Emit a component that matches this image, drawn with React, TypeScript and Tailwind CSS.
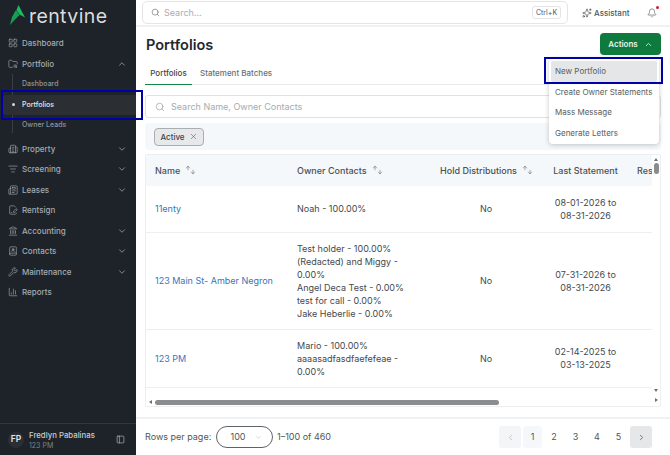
import React from "react";
import {
  LayoutGrid, FolderSearch, ChevronUp, ChevronDown, ChevronLeft, ChevronRight, Building2, ListFilter, Newspaper, FileSignature,
  Landmark, BookUser, Wrench, ChartColumn, Search, Sparkles, Bell, X, PanelLeft, ArrowUp, ArrowDown,
} from "lucide-react";

const Sort = () => (
  <span className="inline-flex items-start ml-[5px] align-middle text-[#4b5563]">
    <ArrowUp size={6} strokeWidth={2} className="-mt-[3px]" />
    <ArrowDown size={6} strokeWidth={2} className="-ml-[1px] mt-[1px]" />
  </span>
);

function NavItem({ icon: Icon, label, chev }: { icon: any; label: string; chev?: "up" | "down" }) {
  return (
    <div className="h-[20.5px] flex items-center pl-[8px] pr-[9px] text-[#a4abb1] text-[8px] font-medium">
      <Icon size={10} strokeWidth={1.5} className="mr-[4px] w-[10px]" />
      <span className="flex-1">{label}</span>
      {chev === "up" && <ChevronUp size={10} strokeWidth={1.8} />}
      {chev === "down" && <ChevronDown size={10} strokeWidth={1.8} />}
    </div>
  );
}

function SubItem({ label, active }: { label: string; active?: boolean }) {
  return (
    <div className={`relative h-[20.5px] flex items-center ml-[3px] pl-[19px] text-[7px] font-medium ${active ? "bg-[#2b2f33] text-[#e5e7e9] rounded-l-[3px]" : "text-[#8f969c]"}`}>
      {active && <span className="absolute left-[8.5px] w-[3px] h-[3px] rounded-full bg-[#d5d8da]" />}
      {label}
    </div>
  );
}

const rows = [
  { name: "11enty", owners: ["Noah - 100.00%"], dates: "08-01-2026 to 08-31-2026", h: "h-[46px]" },
  {
    name: "123 Main St- Amber Negron",
    owners: ["Test holder - 100.00%", "(Redacted) and Miggy - 0.00%", "Angel Deca Test - 0.00%", "test for call - 0.00%", "Jake Heberlie - 0.00%"],
    dates: "07-31-2026 to 08-31-2026",
    h: "",
  },
  { name: "123 PM", owners: ["Mario - 100.00%", "aaaasadfasdfaefefeae - 0.00%"], dates: "02-14-2025 to 03-13-2025", h: "" },
  { name: "", owners: ["Stephanie holder - 100.00%", "Angel Deca Test - 0.00%"], dates: "", h: "" },
];

export default function App() {
  return (
    <div className="relative w-[670px] h-[455px] flex overflow-hidden bg-white text-[#3f4448]" style={{ fontFamily: "Inter, sans-serif" }}>
      <aside className="w-[136px] shrink-0 bg-[#1e2329] flex flex-col">
        <div className="h-[33px] flex items-center pl-[10px] pt-[1px]">
          <svg width="15" height="20" viewBox="0 0 15 20" className="-mt-[4px]">
            <path d="M8.5 0 L15 12.5 L9.5 9.5 L6.5 5 Z" fill="#1fb863" />
            <path d="M6 5 L9.5 10 L5 14.5 L0 20 L2 12 Z" fill="#12a150" />
          </svg>
          <span className="ml-[4px] text-[19.5px] leading-none text-[#d9dcde] tracking-[0.4px]">rentvine</span>
        </div>
        <nav className="flex-1">
          <NavItem icon={LayoutGrid} label="Dashboard" />
          <NavItem icon={FolderSearch} label="Portfolio" chev="up" />
          <div className="relative">
            <span className="absolute left-[12px] top-0 bottom-[3px] w-px bg-[#3a3f44]" />
            <SubItem label="Dashboard" />
            <SubItem label="Portfolios" active />
            <SubItem label="Owner Leads" />
          </div>
          <div className="h-[3px]" />
          <NavItem icon={Building2} label="Property" chev="down" />
          <NavItem icon={ListFilter} label="Screening" chev="down" />
          <NavItem icon={Newspaper} label="Leases" chev="down" />
          <NavItem icon={FileSignature} label="Rentsign" />
          <NavItem icon={Landmark} label="Accounting" chev="down" />
          <NavItem icon={BookUser} label="Contacts" chev="down" />
          <NavItem icon={Wrench} label="Maintenance" chev="down" />
          <NavItem icon={ChartColumn} label="Reports" />
        </nav>
        <div className="h-[32px] border-t border-[#33383d] flex items-center pl-[8px] pr-[11px]">
          <div className="w-[16px] h-[16px] rounded-full bg-[#2a2f34] flex items-center justify-center text-[8.5px] font-semibold text-[#e3e5e7] mr-[5px]">FP</div>
          <div className="flex-1">
            <div className="text-[7.8px] leading-[11px] font-medium text-[#c9cdd0]">Fredlyn Pabalinas</div>
            <div className="text-[7px] leading-[9px] text-[#7d848a]">123 PM</div>
          </div>
          <PanelLeft size={9} strokeWidth={1.6} className="text-[#c2c6c9]" />
        </div>
      </aside>

      <main className="flex-1 min-w-0 flex flex-col">
        <header className="h-[27px] shrink-0 border-b-2 border-[#f0f1f2] flex items-center pl-[6px] pr-[13px]">
          <div className="w-[426px] h-[23px] border border-[#e3e5e7] rounded-[5px] flex items-center pl-[8px] pr-[6px] text-[9px] text-[#a8adb2]">
            <Search size={9} strokeWidth={1.7} className="text-[#666c72] mr-[4px]" />
            <span className="flex-1">Search...</span>
            <span className="h-[13px] w-[29px] text-center border border-[#e3e5e7] rounded-[3px] text-[7px] leading-[11px] text-[#50565b]">Ctrl+K</span>
          </div>
          <Sparkles size={10} strokeWidth={1.5} className="ml-[14px] text-[#3f4448]" />
          <span className="ml-[2px] text-[8px] font-medium text-[#50565b]">Assistant</span>
          <span className="relative ml-auto">
            <Bell size={10} strokeWidth={1.5} className="text-[#50565b]" />
            <span className="absolute -top-[2px] -right-[2px] w-[3px] h-[3px] rounded-full bg-[#d5182f]" />
          </span>
        </header>

        <div className="flex-1 min-h-0 flex flex-col px-[9px]">
          <div className="h-[34px] pt-[6px] flex items-start justify-between shrink-0">
            <h1 className="text-[14.5px] leading-[24px] font-semibold text-[#25282b] ml-px">Portfolios</h1>
            <button className="w-[61px] h-[22px] bg-[#0f7a3e] rounded-[4px] text-[#e8f3ec] text-[8px] font-semibold flex items-center justify-center gap-[6px]">
              Actions <ChevronUp size={9} strokeWidth={2.2} />
            </button>
          </div>

          <div className="h-[24px] shrink-0 border-b border-[#e8eaeb] flex text-[8px]">
            <div className="w-[47px] h-[24px] flex items-center justify-center border-b-[1.5px] border-[#118a47] text-[#3f4448] font-medium">Portfolios</div>
            <div className="ml-[8px] h-[24px] flex items-center text-[#6a7075] font-medium">Statement Batches</div>
          </div>

          <div className="mt-[10px] h-[23px] shrink-0 border border-[#dfe2e4] rounded-[3px] flex items-center pl-[9px] text-[9px] text-[#a5abb0]">
            <Search size={10} strokeWidth={1.5} className="text-[#8d9398] mr-[6px]" />
            Search Name, Owner Contacts
          </div>

          <div className="mt-[5px] h-[27px] shrink-0 bg-[#f5f8fa] rounded-[3px] flex items-center pl-[9px]">
            <span className="h-[18px] w-[50px] bg-[#e6e8ea] border border-[#a9aeb2] rounded-[4px] flex items-center justify-center gap-[4px] text-[8px] font-medium text-[#3f4448]">
              Active <X size={9} strokeWidth={1.3} />
            </span>
          </div>

          <div className="mt-[4px] h-[253px] shrink-0 border border-[#eceef0] rounded-[2px] flex overflow-hidden">
            <div className="flex-1 min-w-0 flex flex-col">
              <div className="flex-1 min-h-0 overflow-hidden">
                <table className="w-[560px] table-fixed border-collapse text-[9px] leading-[13px] text-[#44494d]">
                  <colgroup>
                    <col className="w-[142px]" />
                    <col className="w-[133px]" />
                    <col className="w-[123px]" />
                    <col className="w-[83px]" />
                    <col className="w-[79px]" />
                  </colgroup>
                  <thead>
                    <tr className="h-[31px] bg-[#f5f8fa] text-[#4b5054]">
                      <th className="font-medium text-left pl-[9px]">Name<Sort /></th>
                      <th className="font-medium text-left pl-[9px]">Owner Contacts<Sort /></th>
                      <th className="font-medium text-center pl-[8px] whitespace-nowrap">Hold Distributions<Sort /></th>
                      <th className="font-medium text-center whitespace-nowrap">Last Statement</th>
                      <th className="font-medium text-left pl-[10px]">Res</th>
                    </tr>
                  </thead>
                  <tbody>
                    {rows.map((r, i) => (
                      <tr key={i} className={`border-b border-[#eceef0] align-middle ${r.h}`}>
                        <td className="pl-[9px] text-[#2f78bd] whitespace-nowrap">{r.name}</td>
                        <td className="pl-[9px] pr-[6px] py-[9px]">
                          {r.owners.map((o) => <div key={o}>{o}</div>)}
                        </td>
                        <td className="text-center pl-[7px]">{r.name ? "No" : ""}</td>
                        <td className="text-center px-[10px] py-[9px]">{r.dates}</td>
                        <td />
                      </tr>
                    ))}
                  </tbody>
                </table>
              </div>
              <div className="h-[8px] shrink-0 bg-white flex items-center pl-[3px] text-[#6b7075]">
                <span className="w-0 h-0 border-y-[2.5px] border-y-transparent border-r-[3px] border-r-[#6b7075]" />
                <span className="ml-[3px] w-[344px] h-[5px] rounded-full bg-[#8a8d90]" />
              </div>
            </div>
            <div className="w-[8px] shrink-0 flex flex-col items-center pt-[3px] pb-[3px]">
              <span className="w-0 h-0 border-x-[2.5px] border-x-transparent border-b-[3px] border-b-[#6b7075]" />
              <span className="mt-[2px] w-[5px] h-[11px] rounded-full bg-[#8a8d90]" />
              <span className="mt-auto mb-[6px] w-0 h-0 border-x-[2.5px] border-x-transparent border-t-[3px] border-t-[#6b7075]" />
              <span className="w-0 h-0 border-y-[2.5px] border-y-transparent border-l-[3px] border-l-[#6b7075] mb-[1px]" />
            </div>
          </div>

          <div className="mt-[10px] -mx-[9px] px-[9px] border-t-2 border-[#f0f1f2] flex-1 flex items-center text-[9px] text-[#50565b]">
            <span className="w-[66px] whitespace-nowrap">Rows per page:</span>
            <span className="ml-[5px] w-[57px] h-[22px] border border-[#5f6468] rounded-full flex items-center justify-center gap-[9px] pl-[3px]">
              100 <ChevronDown size={7} strokeWidth={1.6} className="text-[#a5abb0]" />
            </span>
            <span className="ml-[4px]">1–100 of 460</span>
            <div className="ml-auto flex items-center mr-[9px]">
              <span className="w-[22px] h-[22px] bg-[#f3f5f6] rounded-[3px] flex items-center justify-center text-[#b5babd]"><ChevronLeft size={9} /></span>
              <span className="ml-[2px] w-[19px] h-[22px] bg-[#f5f8fa] rounded-[3px] flex items-center justify-center">1</span>
              {["2", "3", "4", "5"].map((n) => (
                <span key={n} className="ml-[2.5px] w-[19px] h-[22px] flex items-center justify-center">{n}</span>
              ))}
              <span className="ml-[2px] w-[22px] h-[22px] bg-[#e5e7e8] rounded-[3px] flex items-center justify-center text-[#50565b]"><ChevronRight size={9} /></span>
            </div>
          </div>
        </div>
      </main>

      {/* Dropdown menu lying over the page */}
      <div className="absolute left-[549px] top-[58px] w-[110px] h-[86px] bg-white rounded-[4px] shadow-[0_1px_5px_rgba(0,0,0,0.22)] p-[2px] pt-[3px] text-[8px] text-[#585d62]">
        <div className="h-[20.5px] flex items-center pl-[4px] bg-[#e4e6e7] rounded-[2px]">New Portfolio</div>
        <div className="h-[20.5px] flex items-center pl-[4px] whitespace-nowrap">Create Owner Statements</div>
        <div className="h-[20.5px] flex items-center pl-[4px]">Mass Message</div>
        <div className="h-[20.5px] flex items-center pl-[4px]">Generate Letters</div>
      </div>

      {/* Annotation rectangles */}
      <div className="absolute left-[1px] top-[90px] w-[142px] h-[30px] border-2 border-[#0000a8] pointer-events-none" />
      <div className="absolute left-[544px] top-[57px] w-[119px] h-[27px] border-2 border-[#0000a8] pointer-events-none" />
    </div>
  );
}
